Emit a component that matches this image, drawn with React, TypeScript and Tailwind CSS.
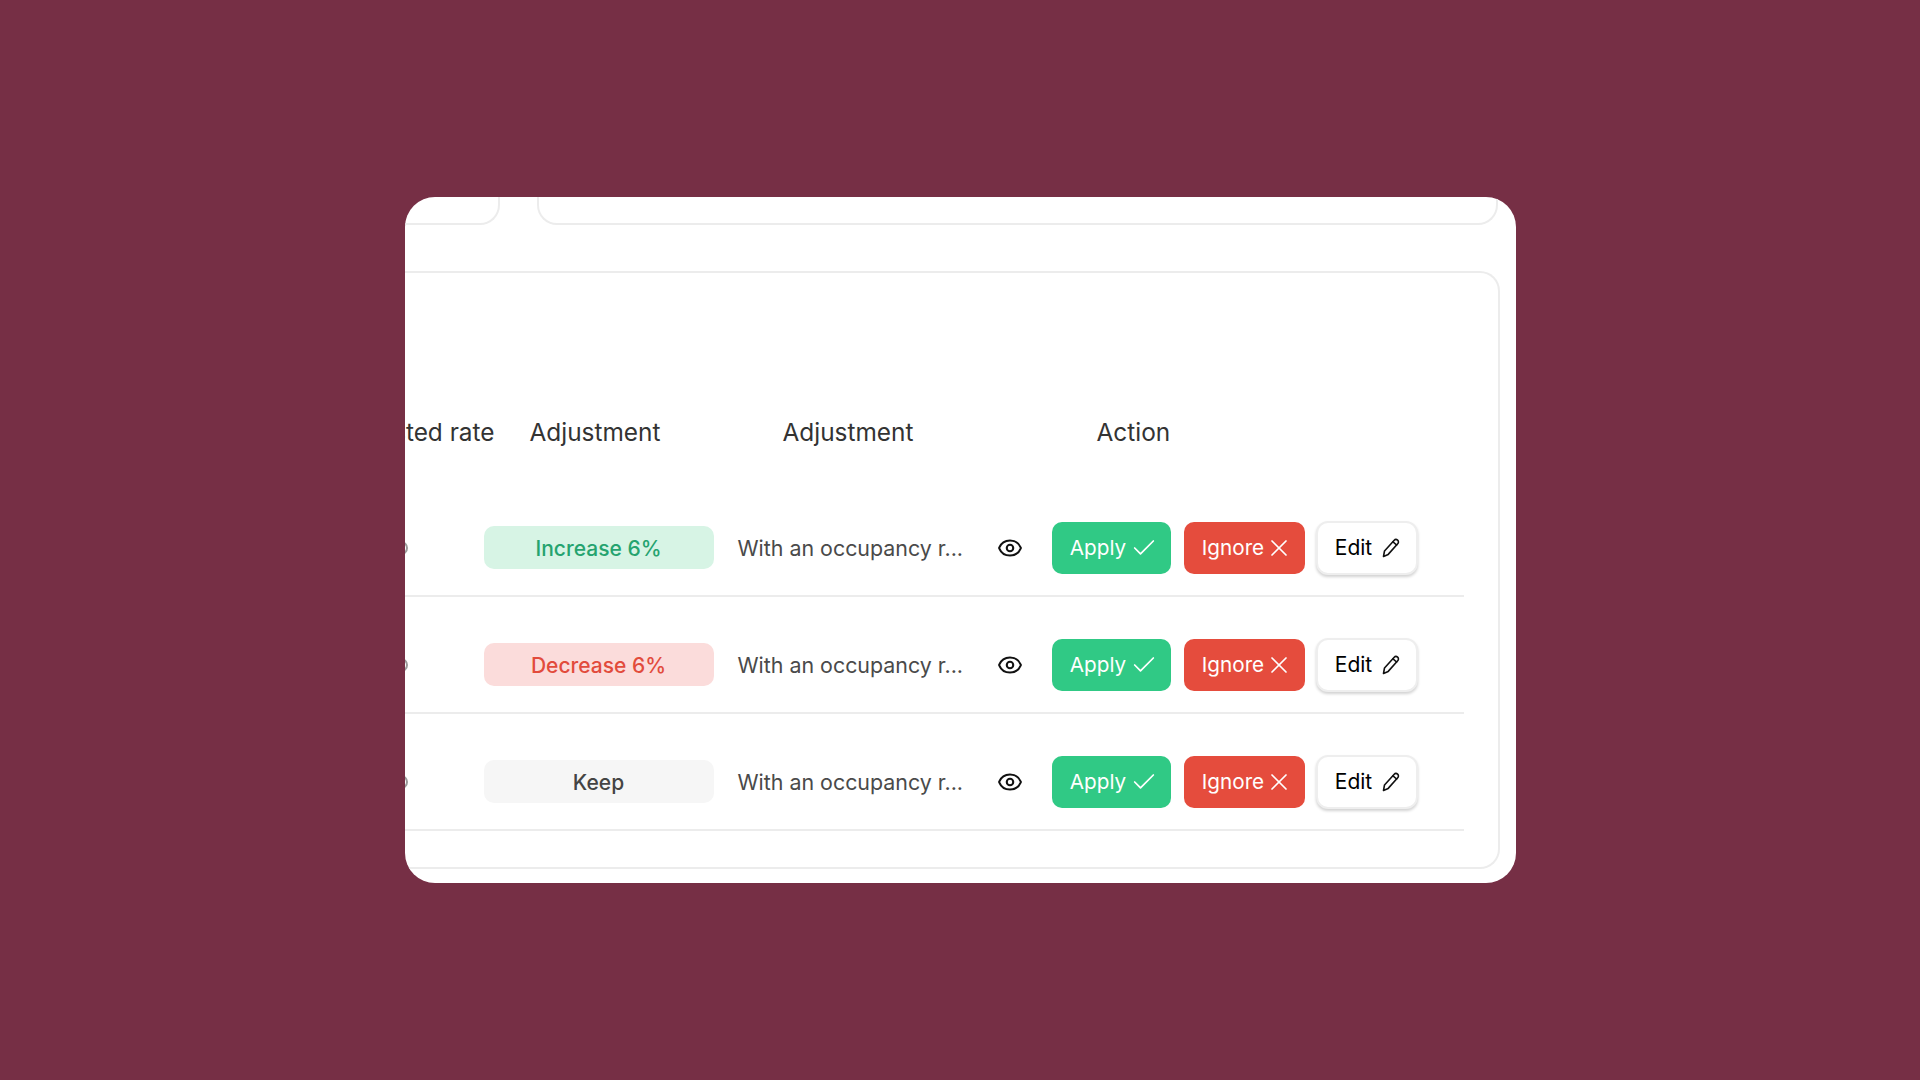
import { Check, Eye, X } from "lucide-react";

const rows = [
  { label: "Increase 6%", pill: "bg-[#d7f4e5] text-[#25a36f]" },
  { label: "Decrease 6%", pill: "bg-[#fbdcdb] text-[#e24b3c]" },
  { label: "Keep", pill: "bg-[#f6f6f6] text-[#444444]" },
];

function PencilIcon() {
  return (
    <svg width="18" height="20" viewBox="0 0 18 20" fill="none" stroke="#111111" strokeWidth="1.6" strokeLinejoin="round" strokeLinecap="round">
      <path d="M1.5 18.5 L2.5 13 L12 2.5 C13 1.4 14.5 1.2 15.6 2.2 C16.7 3.2 16.7 4.7 15.7 5.8 L6.2 16.4 Z" />
      <path d="M11 3.8 L14.6 7" />
    </svg>
  );
}

function Row({ label, pill }: { label: string; pill: string }) {
  return (
    <div className="flex h-[117px] items-center border-b-2 border-[#ececec] pt-[20px]">
      <div className="ml-[-11px] h-[14px] w-[14px] shrink-0 rounded-full border-2 border-[#9a9a9a]" />
      <div className={`ml-[76px] flex h-[43px] w-[230px] items-center justify-center rounded-[10px] pt-[3px] text-[21px] font-medium ${pill}`}>
        {label}
      </div>
      <div className="ml-[24px] w-[259px] pt-[2px] text-[21.4px] text-[#4a4a4a]">With an occupancy r...</div>
      <Eye size={26} strokeWidth={1.9} className="text-[#111111]" />
      <div className="ml-[29px] flex items-center">
        <button className="flex h-[52px] w-[119px] items-center justify-center gap-[4px] rounded-[10px] bg-[#30c985] pl-[6px] text-[20.7px] text-white">
          Apply <Check size={28} strokeWidth={1.5} />
        </button>
        <button className="ml-[13px] flex h-[52px] w-[121px] items-center justify-center gap-[1px] rounded-[10px] bg-[#e54c3d] pl-[7px] text-[20.7px] text-white">
          Ignore <X size={28} strokeWidth={1.5} />
        </button>
        <button className="ml-[11px] flex h-[54px] w-[102px] items-center justify-center gap-[10px] rounded-[12px] border-2 border-[#eeeeee] bg-white pl-[2px] text-[21px] text-black shadow-[0_2px_3px_rgba(0,0,0,0.18)]">
          Edit <PencilIcon />
        </button>
      </div>
    </div>
  );
}

export default function App() {
  return (
    <div className="flex h-[1080px] items-center justify-center bg-[#762f45] font-['Inter',sans-serif]">
      <div className="h-[686px] w-[1111px] overflow-hidden rounded-[30px] bg-white">
        <div className="flex h-[28px] items-end gap-[37px]">
          <div className="h-[28px] w-[95px] rounded-br-[20px] border-r-2 border-b-2 border-[#ececec]" />
          <div className="h-[28px] w-[961px] rounded-b-[20px] border-x-2 border-b-2 border-[#ececec]" />
        </div>
        <div className="mt-[46px] h-[598px] w-[1095px] rounded-r-[20px] border-y-2 border-r-2 border-[#ececec]">
          <div className="h-[207px] pt-[139px] text-[24.4px] leading-[40px] whitespace-nowrap text-[#333333]">
            <div className="flex">
              <span className="ml-[-100px] w-[190px] text-right">Suggested rate</span>
              <span className="ml-[35px] w-[253px]">Adjustment</span>
              <span className="w-[314px]">Adjustment</span>
              <span>Action</span>
            </div>
          </div>
          <div className="w-[1059px]">
            {rows.map((r) => (
              <Row key={r.label} {...r} />
            ))}
          </div>
        </div>
      </div>
    </div>
  );
}
